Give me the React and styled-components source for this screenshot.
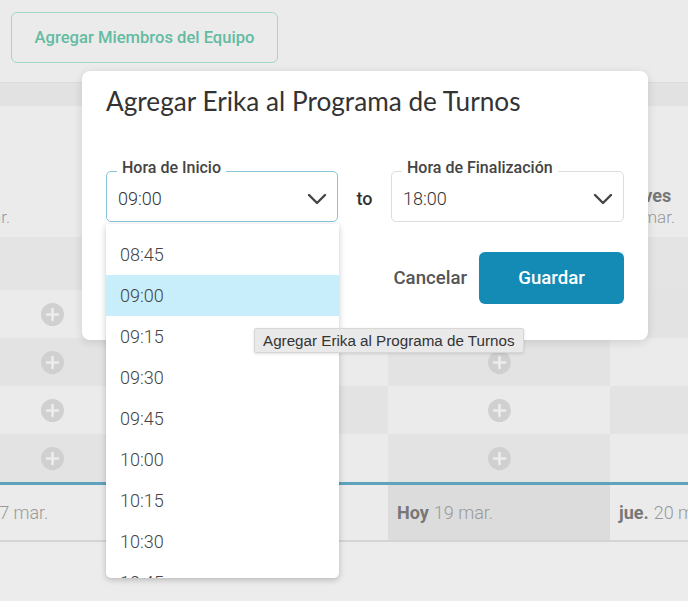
import styled, { createGlobalStyle } from 'styled-components';

const GlobalStyle = createGlobalStyle`
  html, body {
    margin: 0;
    padding: 0;
    background: #ececec;
    font-family: Roboto, "Liberation Sans", Arial, sans-serif;
  }
  #root {
    min-height: 601px;
  }
`;

const Page = styled.div`
  position: relative;
  width: 688px;
  height: 601px;
  overflow: hidden;
  background: #ececec;
`;

const TopBar = styled.div`
  height: 82px;
  box-sizing: border-box;
  padding: 12px 11px;
  background: #ebebeb;
`;

const TeamButton = styled.button`
  width: 267px;
  height: 51px;
  border: 1px solid #a3d8c9;
  border-radius: 6px;
  background: transparent;
  color: #63bba2;
  font-family: Roboto, sans-serif;
  font-weight: 500;
  font-size: 16.6px;
  cursor: pointer;
`;

const Band = styled.div`
  height: 24px;
  background: #e2e2e2;
  border-top: 1px solid #dcdcdc;
  box-sizing: border-box;
`;

const Schedule = styled.div`
  overflow: hidden;
`;

const Row = styled.div`
  display: grid;
  grid-template-columns: 214px 229px 222px 222px;
  margin-left: -55px;
  height: ${(p) => p.$h}px;
  background: ${(p) => p.$bg || 'transparent'};
`;

const HeadCell = styled.div`
  display: flex;
  flex-direction: column;
  justify-content: flex-end;
  padding: 0 0 10px 9px;
  box-sizing: border-box;
`;

const DayName = styled.div`
  font-size: 18px;
  font-weight: 700;
  color: #777;
  line-height: 22px;
`;

const DayDate = styled.div`
  font-size: 17px;
  font-weight: 300;
  color: #999;
  line-height: 20px;
`;

const Slot = styled.div`
  display: flex;
  align-items: center;
  justify-content: center;
  background: ${(p) => (p.$dark ? '#e3e3e3' : '#ebebeb')};
`;

const NowLine = styled.div`
  height: 3px;
  background: #5fa2be;
`;

const DateCell = styled.div`
  display: flex;
  align-items: center;
  gap: 5px;
  padding-left: 9px;
  font-size: 18px;
  background: ${(p) => (p.$today ? '#dcdcdc' : '#ebebeb')};
`;

const DateStrong = styled.span`
  font-weight: 700;
  color: #777;
`;

const DateSoft = styled.span`
  font-weight: 300;
  color: #999;
`;

const BottomRule = styled.div`
  height: 2px;
  background: #d4d4d4;
`;

const Modal = styled.div`
  position: absolute;
  left: 82px;
  top: 71px;
  width: 566px;
  height: 269px;
  box-sizing: border-box;
  padding: 15px 24px 0;
  background: #fff;
  border-radius: 8px;
  box-shadow: 0 2px 10px rgba(0, 0, 0, 0.12);
  display: flex;
  flex-direction: column;
`;

const Title = styled.h2`
  margin: 0;
  font-family: Lato, "Open Sans", sans-serif;
  font-weight: 400;
  font-size: 26.2px;
  line-height: 30px;
  color: #333;
`;

const Fields = styled.div`
  display: grid;
  grid-template-columns: 232px 53px 233px;
  margin-top: 55px;
  align-items: center;
`;

const Field = styled.div`
  position: relative;
  height: 51px;
  box-sizing: border-box;
  border: 1px solid ${(p) => (p.$focused ? '#86c4da' : '#dddddd')};
  border-radius: 5px;
  display: flex;
  align-items: center;
  justify-content: space-between;
  padding: 4px 10px 0 11px;
`;

const FieldLabel = styled.span`
  position: absolute;
  left: 10px;
  top: -14px;
  padding: 0 5px;
  background: #fff;
  font-size: 16px;
  line-height: 20px;
  font-weight: 500;
  color: #444;
`;

const FieldValue = styled.span`
  font-size: 18px;
  font-weight: 300;
  color: #333;
`;

const To = styled.span`
  text-align: center;
  padding-top: 4px;
  font-size: 18px;
  font-weight: 500;
  color: #333;
`;

const Actions = styled.div`
  display: flex;
  justify-content: flex-end;
  align-items: center;
  gap: 12px;
  margin-top: 30px;
`;

const CancelButton = styled.button`
  border: none;
  background: none;
  padding: 0;
  font-family: Roboto, sans-serif;
  font-size: 18.6px;
  font-weight: 500;
  color: #555;
`;

const SaveButton = styled.button`
  width: 145px;
  height: 52px;
  border: none;
  border-radius: 6px;
  background: #138bb5;
  color: #fff;
  font-family: Roboto, sans-serif;
  font-size: 18.6px;
  font-weight: 500;
`;

const Dropdown = styled.ul`
  position: absolute;
  left: 106px;
  top: 224px;
  width: 233px;
  height: 354px;
  margin: 0;
  padding: 10px 0 0;
  list-style: none;
  box-sizing: border-box;
  overflow: hidden;
  background: #fff;
  border-radius: 0 0 5px 5px;
  box-shadow: 0 2px 6px rgba(0, 0, 0, 0.22);
`;

const Option = styled.li`
  height: 41px;
  display: flex;
  align-items: center;
  padding-left: 14px;
  font-size: 18px;
  font-weight: 300;
  color: #444;
  background: ${(p) => (p.$selected ? '#c9eefb' : 'transparent')};
`;

const Tooltip = styled.div`
  position: absolute;
  left: 254px;
  top: 328px;
  height: 25px;
  padding: 0 8px;
  display: flex;
  align-items: center;
  box-sizing: border-box;
  background: #e9e9e9;
  border: 1px solid #d6d6d6;
  border-radius: 2px;
  box-shadow: 0 1px 3px rgba(0, 0, 0, 0.12);
  font-family: "Liberation Sans", Arial, sans-serif;
  font-size: 15.2px;
  color: #333;
  white-space: nowrap;
`;

function Chevron() {
  return (
    <svg width="20" height="12" viewBox="0 0 20 12" fill="none">
      <polyline points="2,2 10,10 18,2" stroke="#444" strokeWidth="2.4" strokeLinecap="round" strokeLinejoin="round" />
    </svg>
  );
}

function PlusIcon() {
  return (
    <svg width="23" height="23" viewBox="0 0 23 23">
      <circle cx="11.5" cy="11.5" r="11.5" fill="#d0d0d0" />
      <path d="M11.5 6v11M6 11.5h11" stroke="#ededed" strokeWidth="2.6" strokeLinecap="round" />
    </svg>
  );
}

const headers = [
  { name: 'lunes', date: '17 mar.' },
  { name: 'martes', date: '18 mar.' },
  { name: 'miércoles', date: '19 mar.' },
  { name: 'jueves', date: '20 mar.' },
];

const footers = [
  { strong: 'lun.', soft: '17 mar.' },
  { strong: 'mar.', soft: '18 mar.' },
  { strong: 'Hoy', soft: '19 mar.', today: true },
  { strong: 'jue.', soft: '20 mar.' },
];

const times = ['08:45', '09:00', '09:15', '09:30', '09:45', '10:00', '10:15', '10:30', '10:45'];

export default function App() {
  return (
    <>
      <GlobalStyle />
      <Page>
        <TopBar>
          <TeamButton>Agregar Miembros del Equipo</TeamButton>
        </TopBar>
        <Band />
        <Schedule>
          <Row $h={131} $bg="#ebebeb">
            {headers.map((h) => (
              <HeadCell key={h.name}>
                <DayName>{h.name}</DayName>
                <DayDate>{h.date}</DayDate>
              </HeadCell>
            ))}
          </Row>
          <Row $h={53} $bg="#e4e4e4" />
          {[0, 1, 2, 3].map((r) => (
            <Row key={r} $h={48}>
              {[0, 1, 2, 3].map((c) => (
                <Slot key={c} $dark={(r + c) % 2 === 1}>
                  {(c === 0 || c === 2) && <PlusIcon />}
                </Slot>
              ))}
            </Row>
          ))}
          <NowLine />
          <Row $h={55}>
            {footers.map((f) => (
              <DateCell key={f.soft} $today={f.today}>
                <DateStrong>{f.strong}</DateStrong>
                <DateSoft>{f.soft}</DateSoft>
              </DateCell>
            ))}
          </Row>
          <BottomRule />
        </Schedule>

        <Modal>
          <Title>Agregar Erika al Programa de Turnos</Title>
          <Fields>
            <Field $focused>
              <FieldLabel>Hora de Inicio</FieldLabel>
              <FieldValue>09:00</FieldValue>
              <Chevron />
            </Field>
            <To>to</To>
            <Field>
              <FieldLabel>Hora de Finalización</FieldLabel>
              <FieldValue>18:00</FieldValue>
              <Chevron />
            </Field>
          </Fields>
          <Actions>
            <CancelButton>Cancelar</CancelButton>
            <SaveButton>Guardar</SaveButton>
          </Actions>
        </Modal>

        <Dropdown>
          {times.map((t) => (
            <Option key={t} $selected={t === '09:00'}>
              {t}
            </Option>
          ))}
        </Dropdown>

        <Tooltip>Agregar Erika al Programa de Turnos</Tooltip>
      </Page>
    </>
  );
}
